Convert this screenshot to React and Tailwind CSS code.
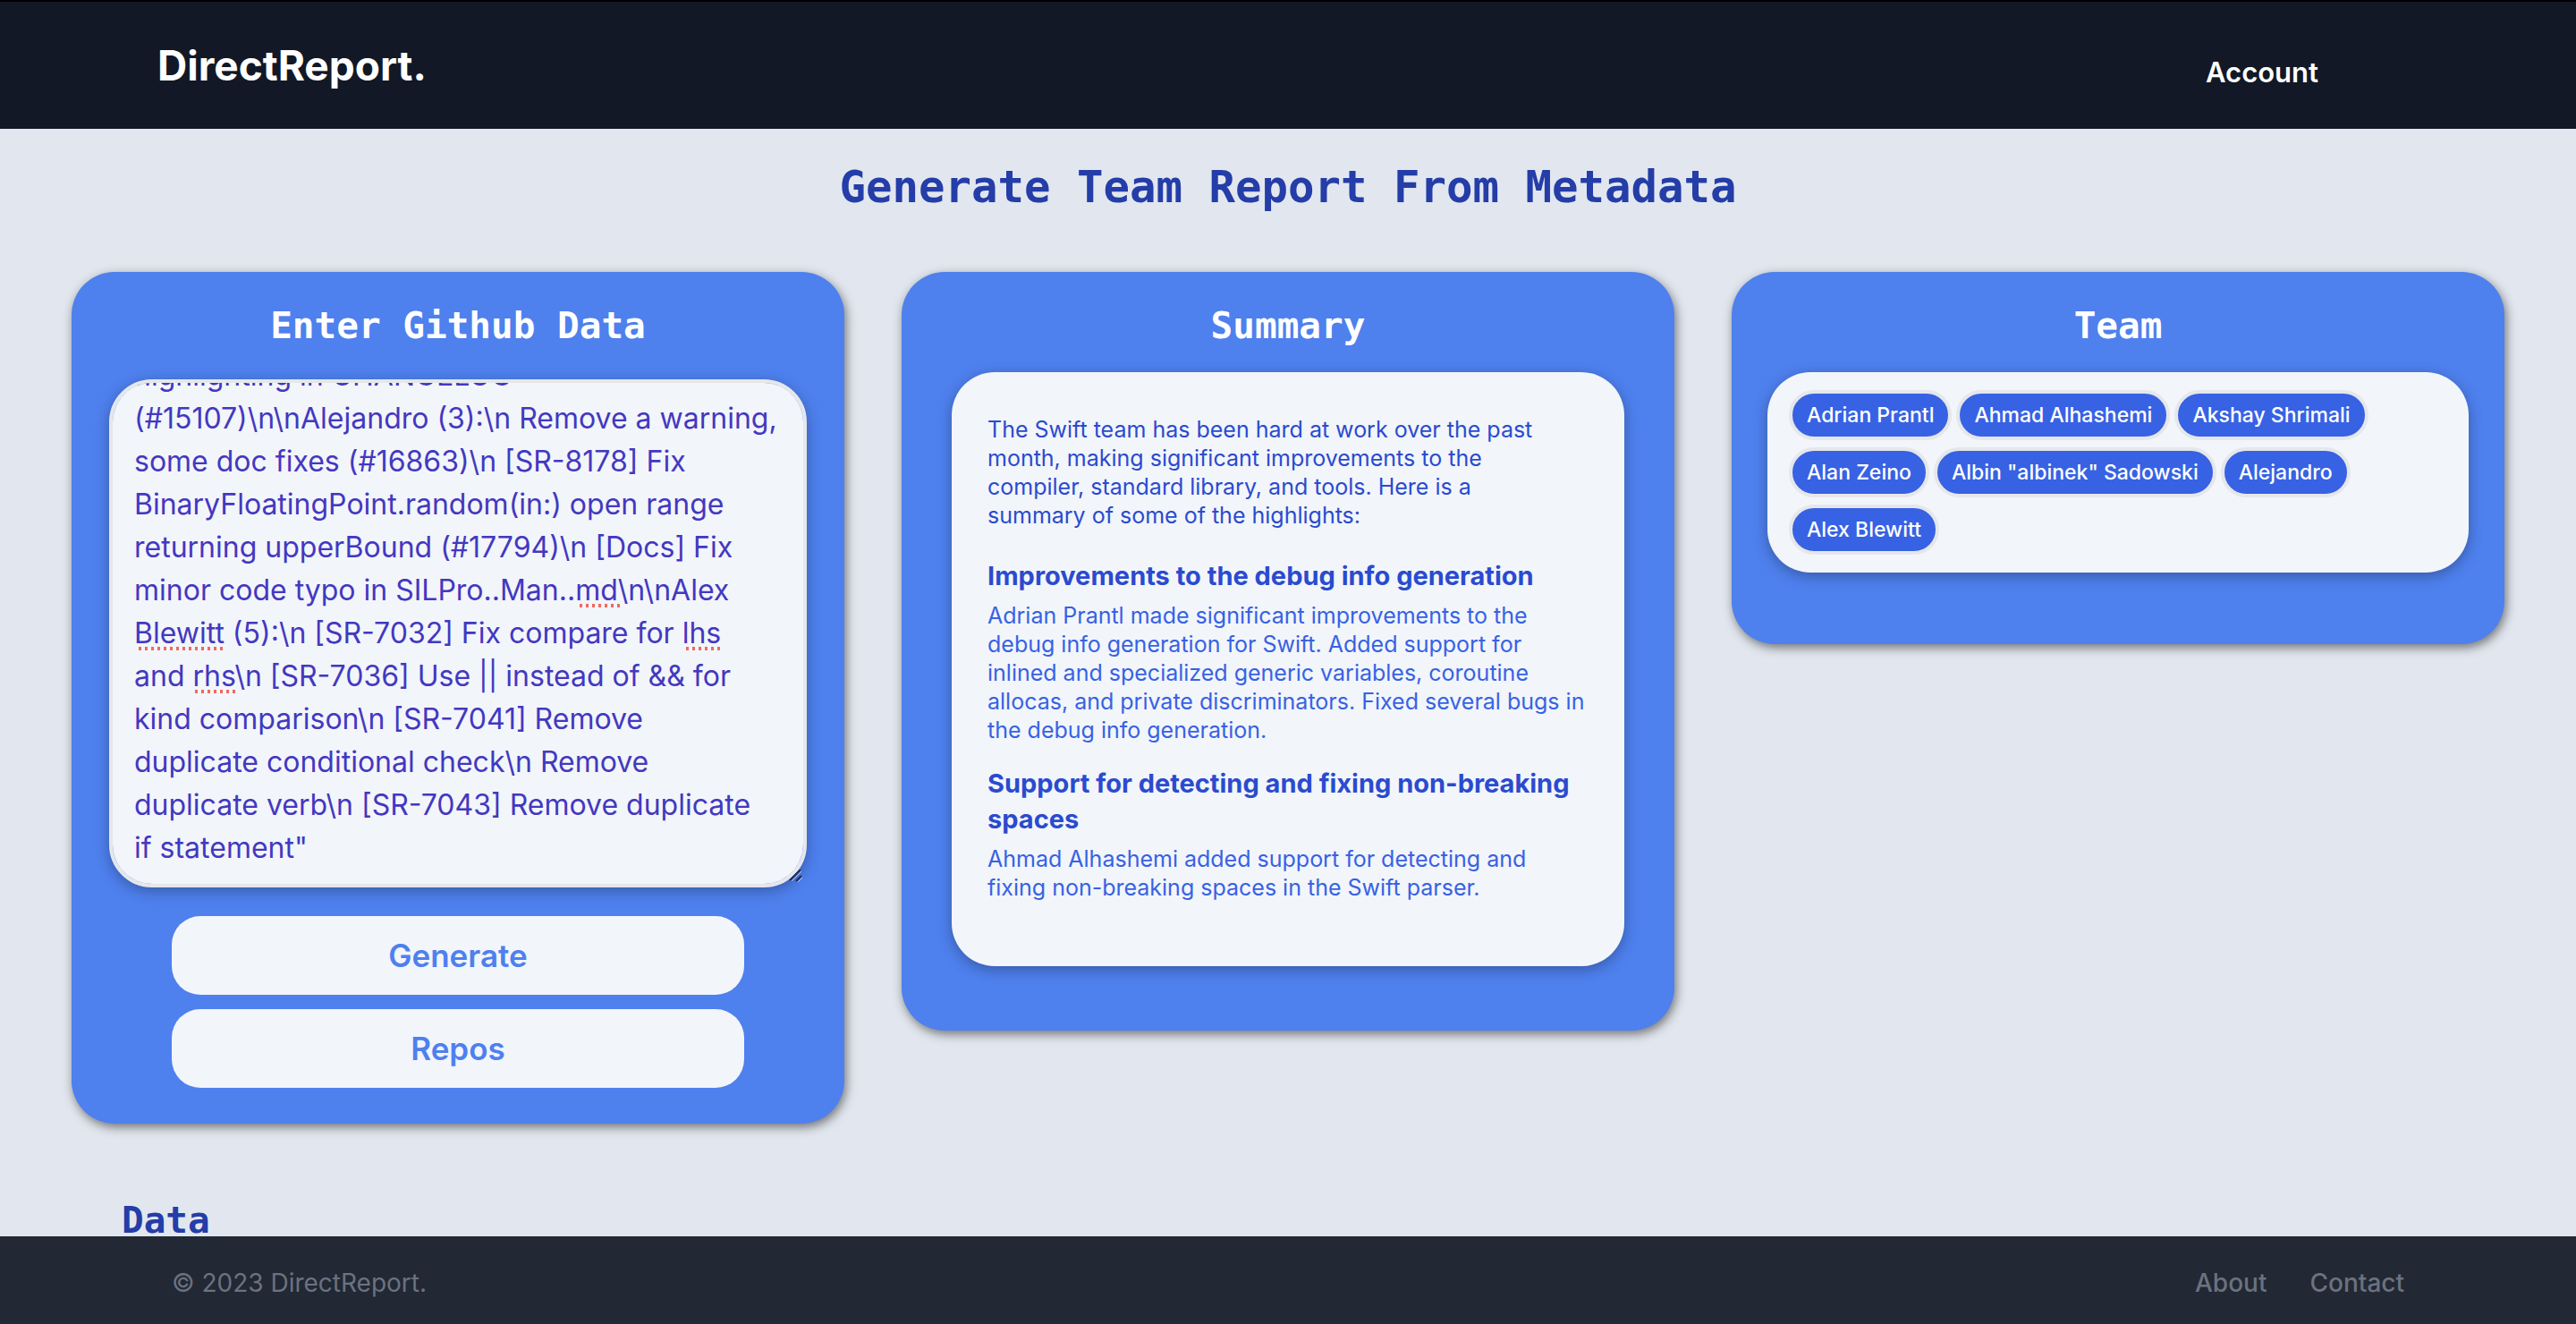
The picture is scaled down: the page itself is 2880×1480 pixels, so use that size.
import { useEffect, useRef } from "react";

const githubData = [
  "minor fixes in docs and syntax",
  "highlighting in CHANGELOG",
  "(#15107)\\n\\nAlejandro (3):\\n Remove a warning,",
  "some doc fixes (#16863)\\n [SR-8178] Fix",
  "BinaryFloatingPoint.random(in:) open range",
  "returning upperBound (#17794)\\n [Docs] Fix",
  "minor code typo in SILPro..Man..md\\n\\nAlex",
  "Blewitt (5):\\n [SR-7032] Fix compare for lhs",
  "and rhs\\n [SR-7036] Use || instead of && for",
  "kind comparison\\n [SR-7041] Remove",
  "duplicate conditional check\\n Remove",
  "duplicate verb\\n [SR-7043] Remove duplicate",
  'if statement"',
].join("\n");

const highlights = [
  {
    title: "Improvements to the debug info generation",
    body: "Adrian Prantl made significant improvements to the debug info generation for Swift. Added support for inlined and specialized generic variables, coroutine allocas, and private discriminators. Fixed several bugs in the debug info generation.",
  },
  {
    title: "Support for detecting and fixing non-breaking spaces",
    body: "Ahmad Alhashemi added support for detecting and fixing non-breaking spaces in the Swift parser.",
  },
];

const team = [
  "Adrian Prantl",
  "Ahmad Alhashemi",
  "Akshay Shrimali",
  "Alan Zeino",
  'Albin "albinek" Sadowski',
  "Alejandro",
  "Alex Blewitt",
];

function Card({ title, className = "", children }) {
  return (
    <section
      className={`rounded-[48px] bg-[#4e80ee] pt-9 shadow-[2px_4px_12px_rgba(0,0,0,0.5)] ${className}`}
    >
      <h2 className="text-center font-['DejaVu_Sans_Mono',monospace] text-[41px] leading-12 font-bold text-white">
        {title}
      </h2>
      {children}
    </section>
  );
}

function SpellingMark({ className }) {
  return (
    <span
      aria-hidden="true"
      className={`pointer-events-none absolute h-1 bg-[radial-gradient(circle,#ef6a5f_2px,transparent_2px)] bg-[length:7px_4px] ${className}`}
    />
  );
}

function GithubInput() {
  const ref = useRef(null);
  useEffect(() => {
    ref.current.scrollTop = ref.current.scrollHeight;
  }, []);
  return (
    <div className="relative mx-[42px] mt-9">
      <textarea
        ref={ref}
        aria-label="Github data"
        spellCheck={false}
        defaultValue={githubData}
        className="block h-[568px] w-full resize-none rounded-[48px] border-4 border-[#e5e7eb] bg-[#f2f5fa] px-6 py-4 font-[Inter,sans-serif] text-[32px] leading-12 whitespace-pre text-[#4338c0] shadow-[0_4px_16px_rgba(0,0,0,0.3)] [scrollbar-width:none]"
      />
      <SpellingMark className="top-[251px] left-[524px] w-[49px]" />
      <SpellingMark className="top-[299px] left-[31px] w-[98px]" />
      <SpellingMark className="top-[299px] left-[643px] w-[42px]" />
      <SpellingMark className="top-[347px] left-[94px] w-[49px]" />
      <svg
        aria-hidden="true"
        viewBox="0 0 16 16"
        className="absolute right-1 bottom-1 size-4"
        fill="none"
      >
        <path d="M1 12L13 0M8 13L14 7" stroke="#1c2f55" strokeWidth="2" />
        <path d="M3 13L14 2M10 14L15 9" stroke="#b9cbef" strokeWidth="1" />
      </svg>
    </div>
  );
}

export default function App() {
  return (
    <div className="min-h-screen bg-[#e2e7ef] font-[Inter,sans-serif]">
      <header className="flex h-36 items-center justify-between border-t-2 border-black bg-[#121826] pr-72 pl-44 text-white">
        <a href="#" className="text-[46px] leading-14 font-bold">
          DirectReport.
        </a>
        <a href="#account" className="pt-4 text-[31px] leading-10 font-semibold">
          Account
        </a>
      </header>

      <main className="px-20 pt-[38px]">
        <h1 className="text-center font-['DejaVu_Sans_Mono',monospace] text-[49px] leading-14 font-bold text-[#243da8]">
          Generate Team Report From Metadata
        </h1>

        <div className="mt-[66px] grid grid-cols-3 items-start gap-16">
          <Card title="Enter Github Data" className="pb-10">
            <GithubInput />
            <div className="mx-28 mt-8 flex flex-col gap-4">
              {["Generate", "Repos"].map((label) => (
                <button
                  key={label}
                  type="button"
                  className="h-22 rounded-[32px] bg-[#f2f5fa] text-[35px] leading-12 font-semibold text-[#4e80ee]"
                >
                  {label}
                </button>
              ))}
            </div>
          </Card>

          <Card title="Summary" className="pb-18">
            <div className="mx-14 mt-7 rounded-[48px] bg-[#f2f5fa] px-10 pt-12 pb-18 shadow-[0_4px_16px_rgba(0,0,0,0.3)]">
              <p className="pr-6 text-[25px] leading-8 text-[#2a4bcf]">
                The Swift team has been hard at work over the past month, making
                significant improvements to the compiler, standard library, and
                tools. Here is a summary of some of the highlights:
              </p>
              <div className="mt-8 flex flex-col gap-6">
                {highlights.map((item) => (
                  <article key={item.title}>
                    <h3 className="text-[29px] leading-10 font-bold text-[#2a4bcf]">
                      {item.title}
                    </h3>
                    <p className="mt-2 text-[25px] leading-8 text-[#3762e4]">
                      {item.body}
                    </p>
                  </article>
                ))}
              </div>
            </div>
          </Card>

          <Card title="Team" className="pb-20">
            <ul className="mx-10 mt-7 flex flex-wrap gap-x-[5px] gap-y-2 rounded-[48px] bg-[#f2f5fa] px-6 py-5 shadow-[0_4px_16px_rgba(0,0,0,0.3)]">
              {team.map((name) => (
                <li
                  key={name}
                  className="rounded-[28px] border-4 border-[#e5e7eb] bg-[#3762e4] px-4 py-2 text-[23px] leading-8 font-medium text-white"
                >
                  {name}
                </li>
              ))}
            </ul>
          </Card>
        </div>

        <h2 className="mt-21 px-14 font-['DejaVu_Sans_Mono',monospace] text-[41px] leading-12 font-bold text-[#243da8]">
          Data
        </h2>
      </main>

      <footer className="fixed inset-x-0 bottom-0 flex items-center justify-between bg-[#222834] px-48 pt-8 pb-[26px] text-[28px] leading-10 text-[#6b7280]">
        <p>© 2023 DirectReport.</p>
        <nav className="flex gap-12 font-medium">
          <a href="#about">About</a>
          <a href="#contact">Contact</a>
        </nav>
      </footer>
    </div>
  );
}
